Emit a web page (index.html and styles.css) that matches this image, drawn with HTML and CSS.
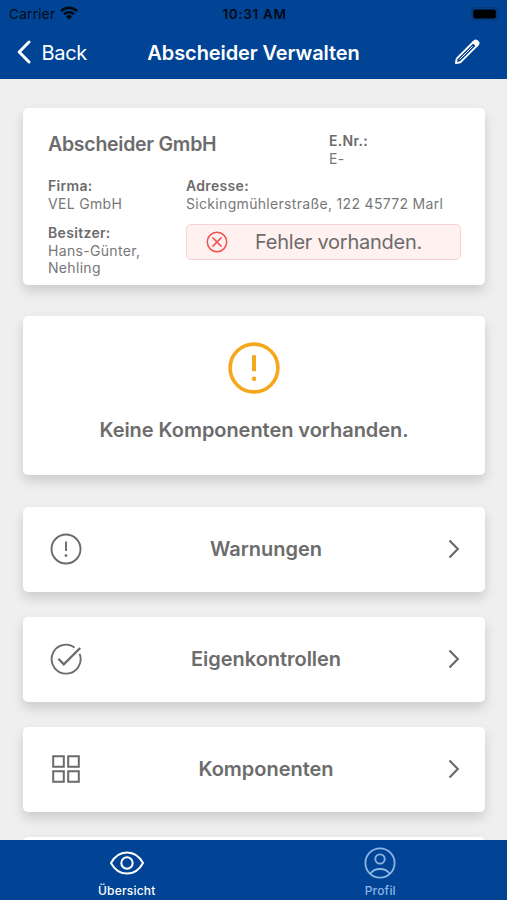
FILE: index.html
```html
<!DOCTYPE html>
<html lang="de">
<head>
<meta charset="utf-8">
<title>Abscheider Verwalten</title>
<link rel="stylesheet" href="styles.css">
</head>
<body>
<div class="app">
  <header class="header">
    <div class="status">
      <div class="carrier"><span class="carrier-name">Carrier</span>
        <svg class="wifi" viewBox="0 0 18 14" fill="none" stroke="#020a14" stroke-width="2.5"><path d="M1 5.1a11.5 11.5 0 0 1 16 0M4 8.2a7.2 7.2 0 0 1 10 0"/><path d="M9 13.5 5.9 10.4a4.4 4.4 0 0 1 6.2 0z" fill="#020a14" stroke="none"/></svg>
      </div>
      <span class="clock">10:31 AM</span>
      <svg class="battery" viewBox="0 0 30 14"><rect x=".7" y=".7" width="25.6" height="12.3" rx="3.5" fill="none" stroke="#063772" stroke-width="1.2"/><rect x="2.2" y="2.4" width="22.6" height="9" rx="2" fill="#000"/><path d="M27.5 5q2 1.8 0 4z" fill="#063772"/></svg>
    </div>
    <nav class="nav">
      <div class="back">
        <svg class="back-icon" viewBox="0 0 14 24" fill="none" stroke="#fff" stroke-width="3" stroke-linecap="round" stroke-linejoin="round"><path d="M12 2 2.2 12 12 22"/></svg>
        <span class="back-label">Back</span>
      </div>
      <h1 class="title">Abscheider Verwalten</h1>
      <svg class="edit" viewBox="0 0 26 26" fill="none" stroke="#fff" stroke-width="1.9" stroke-linejoin="round"><path d="M1.9 24.1 2.7 19.7 19.4 3 23 6.6 6.3 23.3z"/><path d="m19.2 3.2 1.4-1.4q1.2-.9 2.4.2l1 1q1.1 1.2.2 2.4l-1.4 1.4z" fill="#fff"/><path d="m5.5 20.5 13-13" stroke-width="1"/></svg>
    </nav>
  </header>

  <main class="content">
    <section class="card info">
      <div class="row-top">
        <h2 class="company">Abscheider GmbH</h2>
        <div class="field"><b class="label">E.Nr.:</b><span class="value">E-</span></div>
      </div>
      <div class="row">
        <div class="field"><b class="label">Firma:</b><span class="value">VEL GmbH</span></div>
        <div class="field"><b class="label">Adresse:</b><span class="value">Sickingmühlerstraße, 122 45772 Marl</span></div>
      </div>
      <div class="row">
        <div class="field"><b class="label">Besitzer:</b><span class="value">Hans-Günter,<br>Nehling</span></div>
        <div class="alert">
          <svg class="alert-icon" viewBox="0 0 22 22" fill="none" stroke="#ef5350" stroke-width="1.5" stroke-linecap="round"><circle cx="11" cy="11" r="9.7"/><path d="m6.9 6.9 8.2 8.2m0-8.2-8.2 8.2"/></svg>
          <span class="alert-text">Fehler vorhanden.</span>
        </div>
      </div>
    </section>

    <section class="card empty">
      <svg class="empty-icon" viewBox="0 0 52 52" fill="none" stroke="#f6a81c"><circle cx="26" cy="26" r="23.9" stroke-width="3.6"/><path d="M26 13.2v16" stroke-width="4"/><circle cx="26" cy="36.8" r="2.3" fill="#f6a81c" stroke="none"/></svg>
      <p class="empty-text">Keine Komponenten vorhanden.</p>
    </section>

    <section class="card item">
      <svg class="item-icon" viewBox="0 0 32 32" fill="none" stroke="#6b6b6b" stroke-width="1.9"><circle cx="16" cy="16" r="14.5"/><path d="M16 8.4v9.6"/><circle cx="16" cy="22.6" r="1.4" fill="#6b6b6b" stroke="none"/></svg>
      <span class="item-label">Warnungen</span>
      <svg class="chevron" viewBox="0 0 12 20" fill="none" stroke="#6b6b6b" stroke-width="2.2"><path d="m1.5 1.5 8.3 8.5-8.3 8.5"/></svg>
    </section>
    <section class="card item">
      <svg class="item-icon" viewBox="0 0 32 32" fill="none" stroke="#6b6b6b" stroke-width="1.9"><path d="M24.6 4.4a14.5 14.5 0 1 0 5 6.4"/><path d="m8.4 15.7 5.4 5.6L30.2 5" stroke-width="2.3"/></svg>
      <span class="item-label">Eigenkontrollen</span>
      <svg class="chevron" viewBox="0 0 12 20" fill="none" stroke="#6b6b6b" stroke-width="2.2"><path d="m1.5 1.5 8.3 8.5-8.3 8.5"/></svg>
    </section>
    <section class="card item">
      <svg class="item-icon" viewBox="0 0 32 32" fill="none" stroke="#6b6b6b" stroke-width="2"><path d="M3.2 3.2h10.6v10.6H3.2zM18.2 3.2h10.6v10.6H18.2zM3.2 18.2h10.6v10.6H3.2zM18.2 18.2h10.6v10.6H18.2z"/></svg>
      <span class="item-label">Komponenten</span>
      <svg class="chevron" viewBox="0 0 12 20" fill="none" stroke="#6b6b6b" stroke-width="2.2"><path d="m1.5 1.5 8.3 8.5-8.3 8.5"/></svg>
    </section>
    <section class="card item"></section>
  </main>

  <footer class="tabs">
    <div class="tab active">
      <svg class="tab-icon" viewBox="0 0 36 32" fill="none" stroke="currentColor" stroke-width="2"><path d="M2 16C9.5 1.9 26.5 1.9 34 16 26.5 30.1 9.5 30.1 2 16z" stroke-linejoin="round"/><circle cx="18" cy="16" r="5.7"/></svg>
      <span class="tab-label">Übersicht</span>
    </div>
    <div class="tab">
      <svg class="tab-icon" viewBox="0 0 36 32" fill="none" stroke="currentColor" stroke-width="1.8"><circle cx="18" cy="16" r="14.6"/><circle cx="18" cy="12" r="4.7"/><path d="M8.2 26.8c4.5-6.4 15.1-6.4 19.6 0"/></svg>
      <span class="tab-label">Profil</span>
    </div>
  </footer>
</div>
</body>
</html>
```

FILE: styles.css
```css
* { box-sizing: border-box; }
body { margin: 0; font-family: Inter, "Liberation Sans", sans-serif; color: #6c6c6c; background: #efefef; }
h1, h2, p { margin: 0; }
svg { display: block; flex: none; }
.app { height: 900px; display: flex; flex-direction: column; overflow: hidden; }

.header { flex: none; height: 79px; background: #014495; }
.status { height: 27px; display: grid; grid-template-columns: 1fr auto 1fr; align-items: center; padding: 1px 6px 0 9px; color: #020a14; font-size: 13px; }
.carrier { display: flex; align-items: center; gap: 6px; }
.carrier-name { font-size: 13.5px; letter-spacing: .3px; }
.wifi { width: 18px; height: 14px; margin: -2px 0 0 -1px; }
.clock { font-size: 13.5px; font-weight: 600; letter-spacing: .65px; margin: 0 -1px 0 -2px; }
.battery { width: 30px; height: 14px; justify-self: end; }
.nav { height: 52px; display: grid; grid-template-columns: 1fr auto 1fr; align-items: center; padding: 0 27px 2px 17px; color: #fff; }
.back { display: flex; align-items: center; gap: 10.5px; font-size: 20px; letter-spacing: -.3px; }
.back-icon { width: 14px; height: 24px; }
.back-label { padding-top: 2px; }
.title { margin: 0 -5px 0 5px; padding-top: 2px; font-size: 20px; font-weight: 600; letter-spacing: -.1px; white-space: nowrap; }
.edit { width: 26px; height: 26px; justify-self: end; }

.content { flex: 1; min-height: 0; overflow: hidden; padding: 28.5px 22px 0 23px; display: flex; flex-direction: column; }
.card { flex: none; background: #fff; border-radius: 5px; box-shadow: 0 6px 12px rgba(0, 0, 0, .15); }

.info { height: 177px; margin-bottom: 31.5px; padding: 24px 24px 0 25px; }
.row-top { display: grid; grid-template-columns: 281px 1fr; height: 45.4px; }
.company { font-size: 19.5px; line-height: 24px; font-weight: 600; letter-spacing: -.26px; }
.row { display: grid; grid-template-columns: 138px 1fr; height: 47px; }
.field { font-size: 14px; line-height: 17.5px; letter-spacing: .32px; white-space: nowrap; }
.label, .value { display: block; }
.label { font-weight: 600; line-height: 18px; }
.value { color: #777; }
.alert { height: 36px; margin-top: -.4px; border: 1.5px solid #fbd0d0; border-radius: 5px; background: #fff1f0; display: flex; align-items: center; padding-left: 18.5px; gap: 27.5px; }
.alert-icon { width: 22px; height: 22px; }
.alert-text { font-size: 20px; line-height: 24px; letter-spacing: -.24px; white-space: nowrap; }

.empty { height: 159px; margin-bottom: 31.5px; display: flex; flex-direction: column; align-items: center; padding-top: 26px; }
.empty-icon { width: 52px; height: 52px; }
.empty-text { margin-top: 24px; font-size: 20px; line-height: 24px; font-weight: 600; letter-spacing: -.05px; }

.item { height: 85.5px; margin-bottom: 24.5px; display: grid; grid-template-columns: 32px 1fr 12px; align-items: center; padding: 0 25px 0 27px; }
.item-icon { width: 32px; height: 32px; }
.item-label { padding-left: 2px; text-align: center; font-size: 20px; font-weight: 600; line-height: 24px; letter-spacing: -.03px; }
.chevron { width: 12px; height: 20px; }

.tabs { flex: none; height: 60px; background: #014495; display: grid; grid-template-columns: 1fr 1fr; }
.tab { display: flex; flex-direction: column; align-items: center; padding-top: 7px; color: #8db5e4; }
.active { color: #fff; }
.tab-icon { width: 36px; height: 32px; }
.tab-label { margin-top: 4px; font-size: 12px; line-height: 15px; font-weight: 500; letter-spacing: .2px; }
```
